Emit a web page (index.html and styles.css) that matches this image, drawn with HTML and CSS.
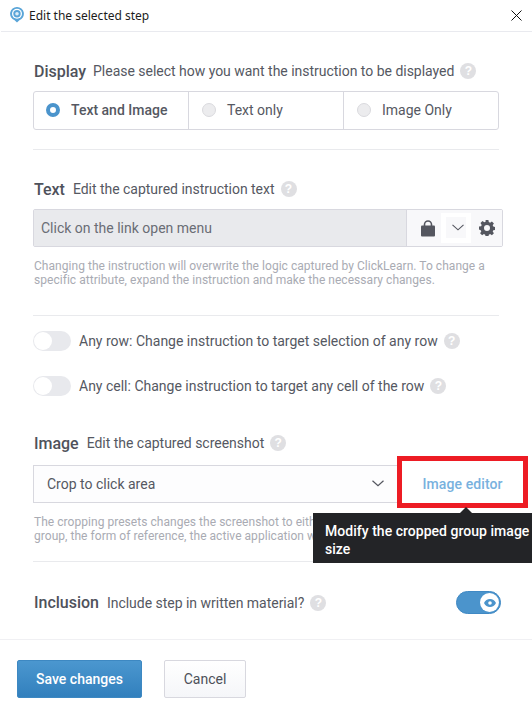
FILE: index.html
```html
<!DOCTYPE html>
<html lang="en">
<head>
<meta charset="utf-8">
<title>Edit the selected step</title>
<link rel="stylesheet" href="styles.css">
</head>
<body>
<div class="dialog">
  <header class="titlebar">
    <svg class="logo" width="14" height="16" viewBox="0 0 14 16"><path d="M7 0a6.800 6.800 0 0 1 2.400 13.200L7 15.500l-2.400-2.300A6.800 6.800 0 0 1 7 0z" fill="#5aa5d8"/><circle cx="7" cy="6.800" r="5" fill="#fff"/><circle cx="7" cy="6.800" r="3.700" fill="#5aa5d8"/><circle cx="7" cy="6.800" r="1.800" fill="#dcecf7"/></svg>
    <span class="title">Edit the selected step</span>
    <svg class="close" width="11" height="11" viewBox="0 0 11 11"><path d="M.5.5l10 10M10.500.5l-10 10" stroke="#111" stroke-width="1" fill="none"/></svg>
  </header>

  <main class="content">
    <section class="section section-display">
      <div class="heading"><b class="tight">Display</b><span>Please select how you want the instruction to be displayed</span><i class="help">?</i></div>
      <div class="radios">
        <label class="radio first"><i class="dot on"></i><b>Text and Image</b></label>
        <label class="radio second"><i class="dot"></i>Text only</label>
        <label class="radio third"><i class="dot"></i>Image Only</label>
      </div>
    </section>

    <section class="section section-text">
      <div class="heading"><b>Text</b><span>Edit the captured instruction text</span><i class="help">?</i></div>
      <div class="inputgroup">
        <div class="inputfield">Click on the link open menu</div>
        <div class="addons">
          <svg class="lock" width="14" height="17" viewBox="0 0 14 17"><path d="M3.500 6V4.500a3.500 3.500 0 0 1 7 0V6" fill="none" stroke="#54565f" stroke-width="1.600"/><rect x="0" y="5.500" width="14" height="11" rx="1" fill="#54565f"/></svg>
          <span class="chevbox"><svg width="12" height="7" viewBox="0 0 12 7"><path d="M.5.800L6 5.800 11.500.800" fill="none" stroke="#54565f" stroke-width="1.100"/></svg></span>
          <svg width="16" height="16" viewBox="0 0 16 16"><path fill="#54565f" fill-rule="evenodd" d="M6.600 0h2.800l.4 2.100 1.300.6 1.800-1.200 2 2-1.200 1.800.6 1.300 2.100.4v2.800l-2.100.4-.6 1.300 1.200 1.800-2 2-1.800-1.200-1.300.6-.4 2.100H6.600l-.4-2.100-1.300-.6-1.800 1.200-2-2 1.200-1.800-.6-1.300L0 9.400V6.600l2.100-.4.6-1.300-1.200-1.800 2-2 1.800 1.200 1.300-.6zM8 5a3 3 0 1 0 0 6 3 3 0 0 0 0-6z"/></svg>
        </div>
      </div>
      <p class="note">Changing the instruction will overwrite the logic captured by ClickLearn. To change a specific attribute, expand the instruction and make the necessary changes.</p>
    </section>

    <section class="toggles">
      <div class="togglerow"><i class="switch"></i><span>Any row: Change instruction to target selection of any row</span><i class="help">?</i></div>
      <div class="togglerow"><i class="switch"></i><span>Any cell: Change instruction to target any cell of the row</span><i class="help">?</i></div>
    </section>

    <section class="section section-image">
      <div class="heading"><b>Image</b><span>Edit the captured screenshot</span><i class="help">?</i></div>
      <div class="selectrow">
        <div class="select">Crop to click area<svg width="12" height="7" viewBox="0 0 12 7"><path d="M.5.800L6 5.800 11.500.800" fill="none" stroke="#54565f" stroke-width="1.200"/></svg></div>
        <a class="editor">Image editor</a>
        <div class="tooltip">Modify the cropped group image size</div>
      </div>
      <p class="note note-narrow">The cropping presets changes the screenshot to either the clicked element, the group, the form of reference, the active application window or the entire screen.</p>
    </section>

    <section class="inclusion">
      <div class="heading"><b>Inclusion</b><span>Include step in written material?</span><i class="help">?</i></div>
      <div class="eyeswitch"><i class="knob"><svg width="12" height="8" viewBox="0 0 12 8"><path fill="#4b94cc" fill-rule="evenodd" d="M6 0c2.600 0 4.800 1.600 6 4-1.200 2.400-3.400 4-6 4S1.200 6.400 0 4c1.200-2.400 3.400-4 6-4zm0 2.200a1.800 1.800 0 1 0 0 3.600 1.800 1.800 0 0 0 0-3.600z"/></svg></i></div>
    </section>
  </main>

  <footer class="footer">
    <button class="btn primary">Save changes</button>
    <button class="btn">Cancel</button>
  </footer>
</div>
</body>
</html>
```
FILE: styles.css
```css
* { box-sizing: border-box; }
html, body { margin: 0; height: 100%; }
body { background: #fff; font-family: Roboto, sans-serif; color: #4d5059; overflow: hidden; }
.dialog { width: 532px; height: 720px; display: flex; flex-direction: column; overflow: hidden; }

.titlebar { height: 32px; flex: none; display: flex; align-items: center; padding: 0 10px 1px 9px; border-bottom: 1px solid #e9eaef; margin-left: 1px; }
.logo { margin-right: 6px; flex: none; }
.title { font: 12px "Noto Sans", sans-serif; color: #1c1c1c; flex: 1; margin-left: -1px; }
.close { flex: none; }

.content { flex: none; height: 608px; padding: 0 33px; border-bottom: 1px solid #f0f0f3; }
.section { border-bottom: 1px solid #e9eaed; }
.section-display { height: 118px; padding-top: 29px; }
.section-text { height: 166px; padding-top: 29px; }
.section-image { height: 166px; padding-top: 37px; }

.heading { display: flex; align-items: center; height: 20px; font-size: 14px; letter-spacing: -.02px; color: #555862; white-space: nowrap; }
.heading b { font-size: 16px; font-weight: 500; color: #4f525b; margin: 0 8px 0 1px; }
.heading b.tight { margin-right: 7px; }
.help { width: 16px; height: 16px; border-radius: 50%; background: #dfdfe2; color: #fff; font: normal bold 12px/16px "Liberation Sans", sans-serif; text-align: center; margin-left: 6px; flex: none; }

.radios { display: flex; width: 466px; height: 39px; margin-top: 10px; border: 1px solid #d8d8df; border-radius: 3px; }
.radio { display: flex; align-items: center; font-size: 14px; color: #555862; border-left: 1px solid #d8d8df; height: 100%; padding-bottom: 2px; }
.radio b { font-weight: 500; }
.radio.first { width: 154px; border-left: 0; padding-left: 12px; }
.radio.second { width: 155px; padding-left: 13px; }
.radio.third { flex: 1; padding-left: 13px; }
.dot { width: 14px; height: 14px; border-radius: 50%; background: #ececee; border: 1px solid #dadade; margin-right: 11px; }
.dot.on { background: #fff; border: 4px solid #4b94cc; }

.inputgroup { display: flex; width: 470px; height: 38px; margin-top: 10px; border: 1px solid #d8d8df; border-radius: 2px; }
.inputfield { width: 373px; background: #e9eaed; border-right: 1px solid #d8d8df; font-size: 14px; color: #6a6d75; line-height: 37px; padding-left: 7px; }
.addons { flex: 1; background: #f8f8fa; display: flex; align-items: center; padding-left: 14px; }
.chevbox { width: 30px; height: 30px; margin: 0 8px 0 6px; padding-left: 3px; background: #f8f8fa; border: solid #fff; border-width: 4px 5px 5px; display: flex; align-items: center; justify-content: center; }
.note { margin: 12px 0 0 1px; font-size: 12px; line-height: 14px; letter-spacing: .04px; color: #a9abb3; }
.note-narrow { width: 445px; }

.toggles { display: flex; flex-direction: column; gap: 25px; padding-top: 15px; }
.togglerow { height: 20px; display: flex; align-items: center; font-size: 14px; color: #555862; white-space: nowrap; }
.switch { width: 38px; height: 20px; border-radius: 10px; background: #e8e9ed; margin-right: 8px; position: relative; flex: none; }
.switch::before { content: ""; position: absolute; left: 1px; top: 1px; width: 18px; height: 18px; border-radius: 50%; background: #fff; }

.selectrow { display: flex; height: 38px; margin: 12px -24px 0 0; position: relative; }
.select { width: 369px; flex: none; border: 1px solid #d8d8df; border-right: 0; background: #fdfdfe; display: flex; justify-content: space-between; align-items: center; padding: 0 18px 1px 13px; font-size: 14px; color: #555862; }
.editor { flex: 1; display: flex; align-items: center; justify-content: center; font-size: 14px; font-weight: 500; letter-spacing: .1px; color: #78b1de; padding-bottom: 1px; }
.editor::after { content: ""; position: absolute; left: 364px; top: -9px; width: 121px; height: 42px; border: 5px solid #ed1c24; pointer-events: none; }
.tooltip { position: absolute; left: 280px; top: 48px; width: 219px; height: 50px; background: #232427; color: #fff; font-size: 14px; font-weight: 500; line-height: 18px; letter-spacing: .03px; padding: 9px 0 0 12px; z-index: 2; }
.tooltip::before { content: ""; position: absolute; left: 147px; top: -6px; border: 6px solid transparent; border-top: 0; border-bottom-color: #232427; }

.inclusion { display: flex; justify-content: space-between; align-items: center; height: 23px; margin-top: 29px; }
.eyeswitch { width: 45px; height: 23px; border-radius: 12px; background: #4b94cc; border: 1px solid #4089c4; position: relative; margin-right: -2px; }
.knob { position: absolute; right: 1px; top: 1px; width: 19px; height: 19px; border-radius: 50%; background: #fff; display: flex; align-items: center; justify-content: center; }

.footer { display: flex; gap: 22px; padding: 20px 0 0 17px; }
.btn { height: 38px; border-radius: 2px; border: 1px solid #d8d8df; background: linear-gradient(#fff, #f5f6f9); font: 14px Roboto, sans-serif; color: #4d5059; width: 82px; }
.btn.primary { width: 125px; border-color: #3d88c2; background: linear-gradient(#4b97cf, #3280bd); color: #fff; font-weight: 500; }
```
